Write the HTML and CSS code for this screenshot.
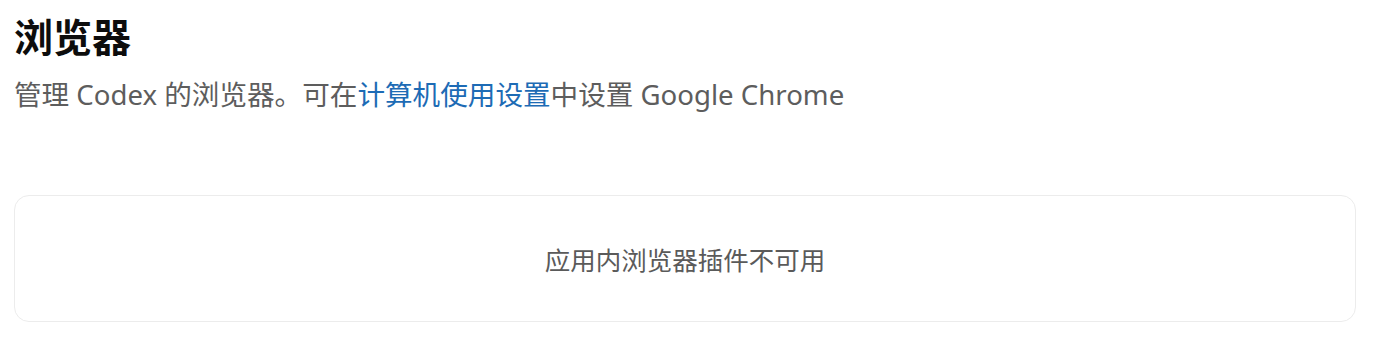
FILE: index.html
```html
<!DOCTYPE html>
<html lang="zh-CN">
<head>
  <meta charset="UTF-8">
  <meta name="viewport" content="width=device-width, initial-scale=1.0">
  <title>浏览器</title>
  <link rel="stylesheet" href="styles.css">
</head>
<body>
  <div class="page">
    <div class="header">
      <h1 class="title">浏览器</h1>
      <p class="subtitle">管理 Codex 的浏览器。可在<a class="link" href="#">计算机使用设置</a>中设置 Google Chrome</p>
    </div>

    <div class="card">
      <p class="card-text">应用内浏览器插件不可用</p>
    </div>
  </div>
</body>
</html>
```

FILE: styles.css
```css
body {
  margin: 0;
  background-color: #ffffff;
  font-family: "Segoe UI", "Noto Sans", "Noto Sans CJK SC", sans-serif;
}
.page {
  padding: 11px 17px 0 14px;
}
.header {
  display: flex;
  flex-direction: column;
}
.title {
  margin: 0;
  font-size: 39px;
  line-height: 48px;
  font-weight: 700;
  color: #0d0d0d;
  font-family: "Noto Sans CJK SC", sans-serif;
}
.subtitle {
  margin: 15px 0 0;
  font-size: 27.6px;
  line-height: 40px;
  color: #5d5d5d;
}
.link {
  color: #1d6bb5;
  text-decoration: none;
}
.card {
  margin-top: 81px;
  height: 125px;
  border: 1px solid #ececec;
  border-radius: 15px;
  display: flex;
  align-items: center;
  justify-content: center;
}
.card-text {
  margin: 0;
  font-size: 25.5px;
  color: #5a5a5a;
}
```
